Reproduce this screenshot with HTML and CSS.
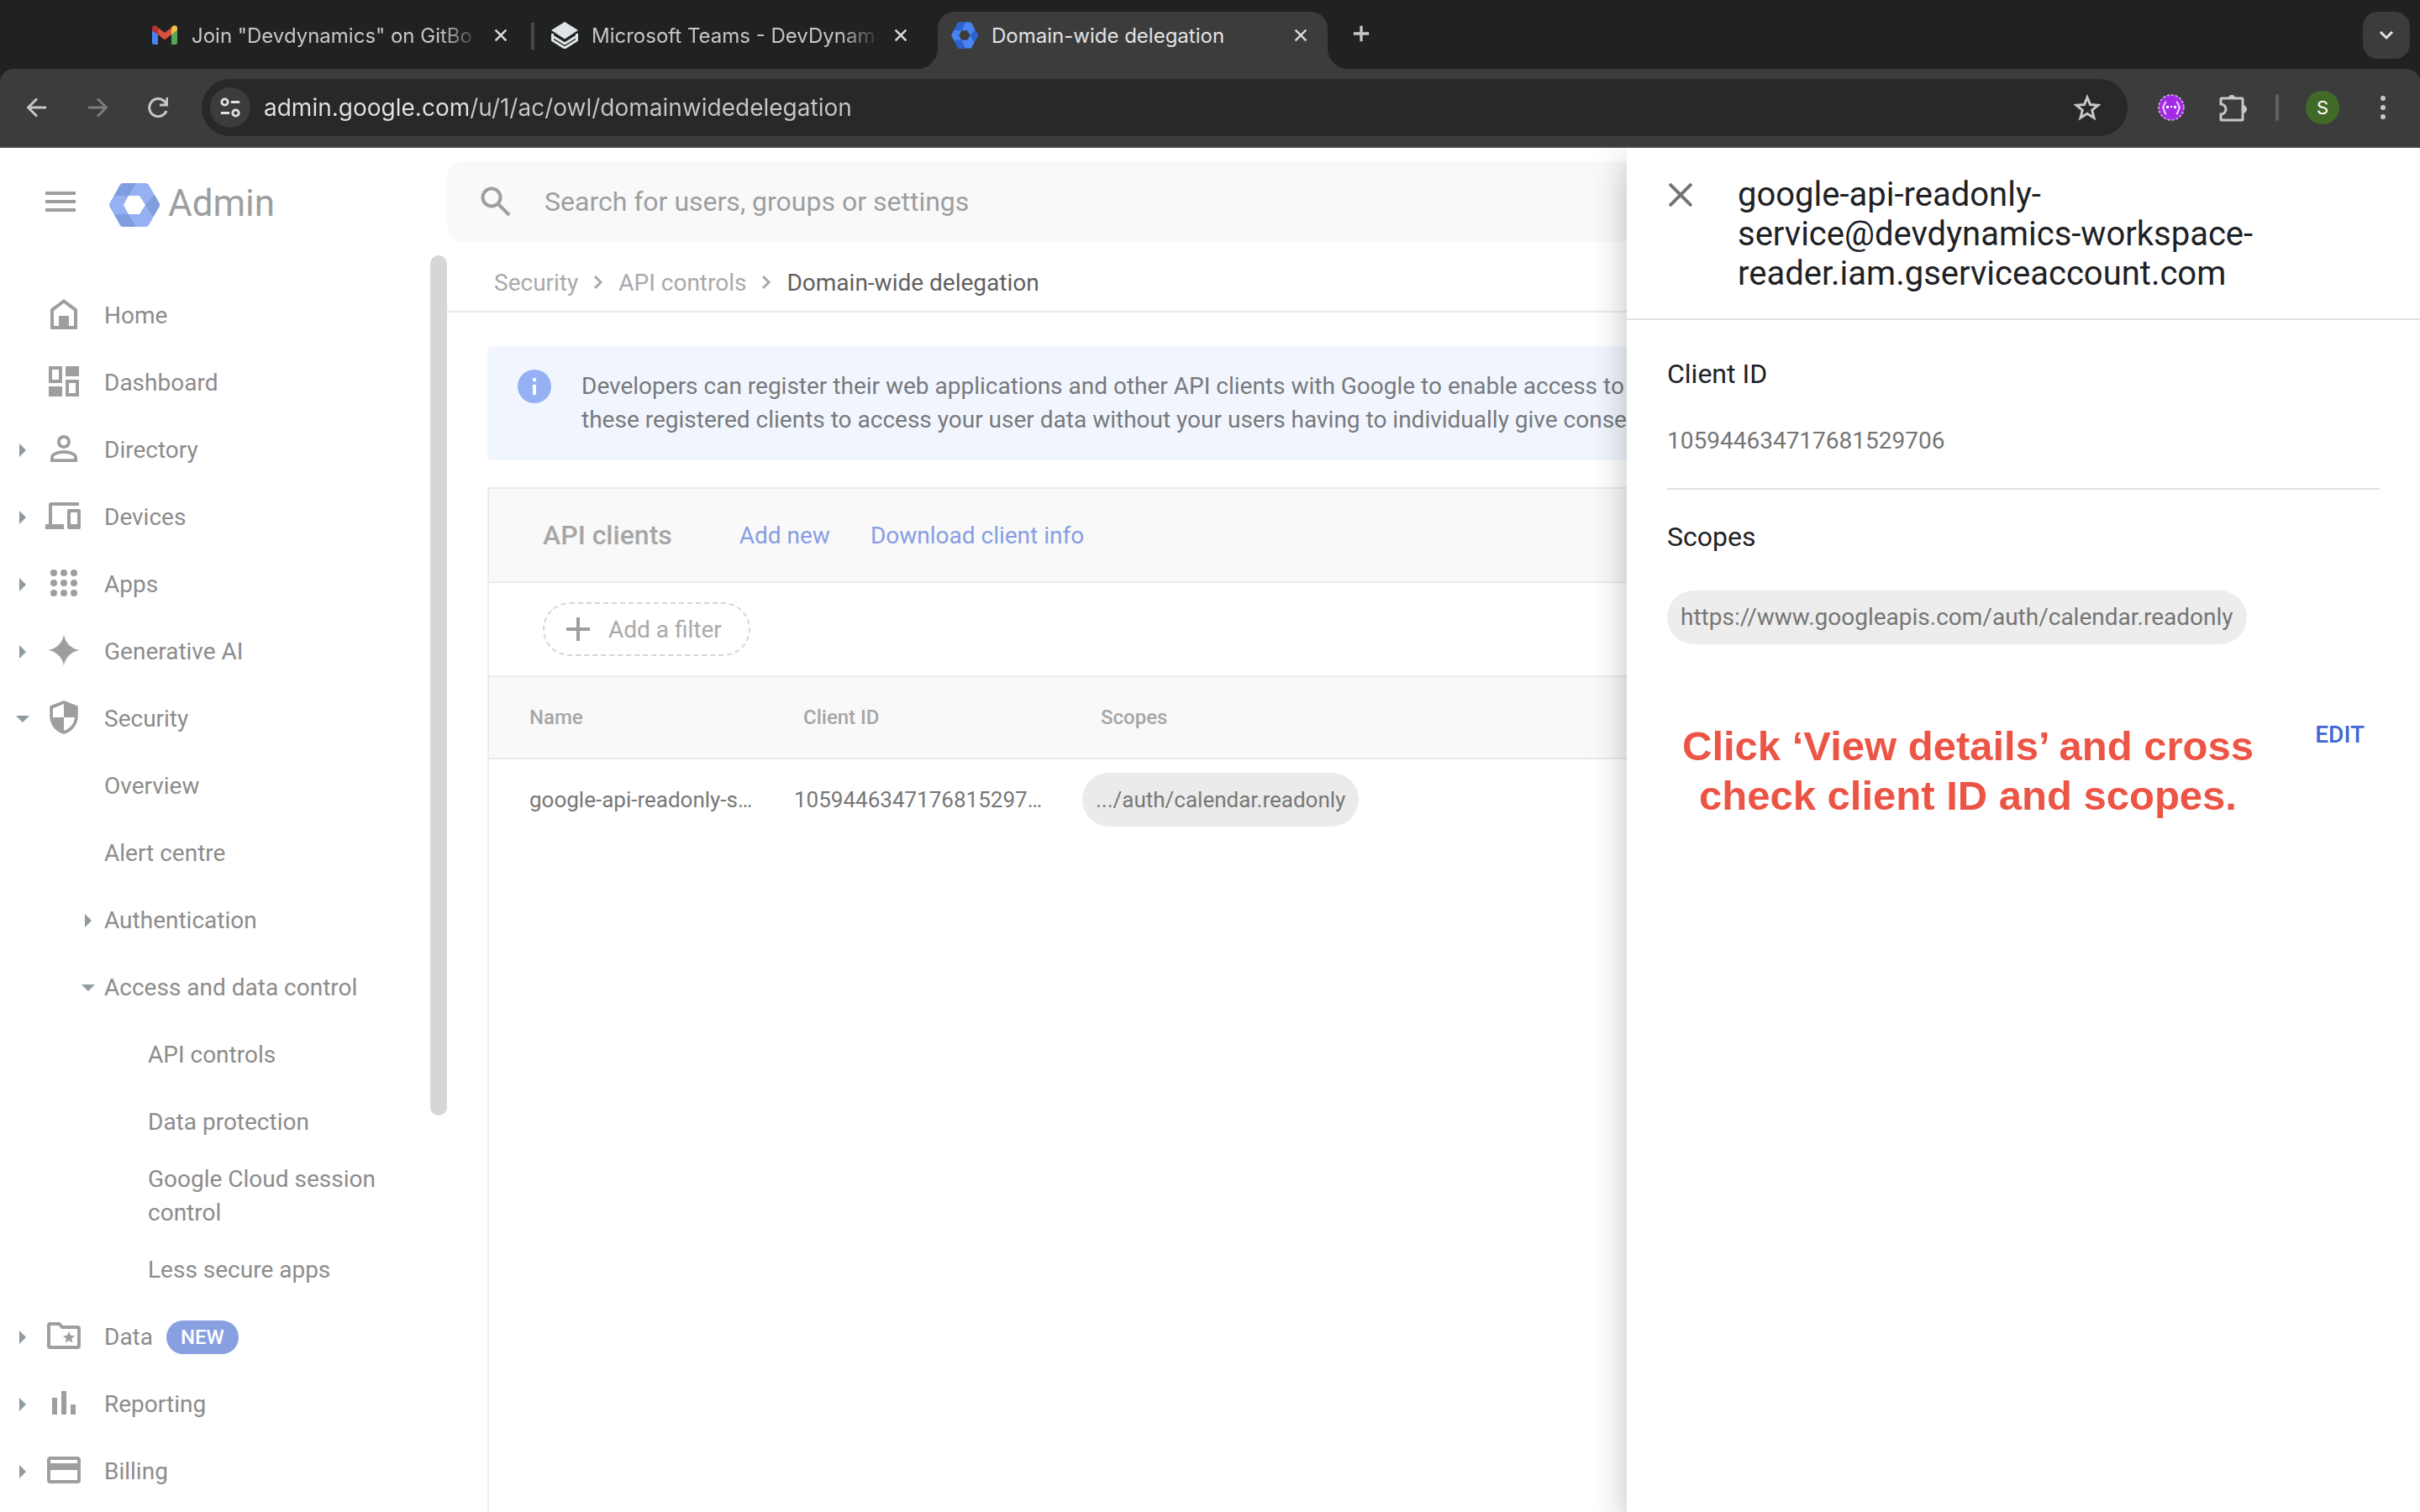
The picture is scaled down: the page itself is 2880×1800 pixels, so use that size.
FILE: index.html
```
<!DOCTYPE html>
<html lang="en">
<head>
    <meta charset="UTF-8">
    <meta name="viewport" content="width=device-width, initial-scale=1.0">
    <title>Domain-wide delegation</title>
    <link rel="stylesheet" href="styles.css">
</head>
<body>
    <header class="browser">
        <div class="tabs">
            <div class="tab">
                <svg class="favicon" viewBox="0 0 32 32">
                    <path fill="#4a84f4" d="M1 10v15a2 2 0 0 0 2 2h5V15z"/>
                    <path fill="#56a65b" d="M31 10v15a2 2 0 0 1-2 2h-5V15z"/>
                    <path fill="#d9503f" d="M8 15V7l8 6 8-6v8l-8 6.500z"/>
                    <path fill="#b8312a" d="M1 10V7.500C1 4 4.500 3.500 7 5.500L8 6.500V15.500z"/>
                    <path fill="#f2bd42" d="M31 10V7.500C31 4 27.500 3.500 25 5.500L24 6.500V15.500z"/>
                </svg>
                <span class="tab-title">Join "Devdynamics" on GitBo</span>
                <button class="tab-close" aria-label="Close tab"><svg viewBox="0 0 20 20"><path d="M2 2l16 16M18 2L2 18"/></svg></button>
            </div>
            <div class="tab-separator"></div>
            <div class="tab">
                <svg class="favicon" viewBox="0 0 32 32">
                    <path fill="#dfe4e6" d="M16 0l16 10-16 10.500L0 10z"/>
                    <path fill="none" stroke="#dfe4e6" stroke-width="3" stroke-linejoin="round" d="M1.500 14v3L16 26l14.500-9v-3"/>
                    <path fill="none" stroke="#dfe4e6" stroke-width="3" stroke-linejoin="round" d="M1.500 17v5L16 31l14.500-9v-5"/>
                </svg>
                <span class="tab-title">Microsoft Teams - DevDynam</span>
                <button class="tab-close" aria-label="Close tab"><svg viewBox="0 0 20 20"><path d="M2 2l16 16M18 2L2 18"/></svg></button>
            </div>
            <div class="tab tab-active">
                <svg class="favicon" viewBox="-1 -4 62 60">
                    <path fill="#4a84f4" fill-rule="evenodd" d="M15 -4h30L61 26 45 56H15L-1 26zM23 15l-6 11 6 11h13l7-11-7-11z"/>
                    <path fill="#2b62d0" d="M15-4h17L23 15H5zM54 13L43 26l9 17 9-17zM5 37h18l9 19H15z"/>
                </svg>
                <span class="tab-title">Domain-wide delegation</span>
                <button class="tab-close" aria-label="Close tab"><svg viewBox="0 0 20 20"><path d="M2 2l16 16M18 2L2 18"/></svg></button>
            </div>
            <button class="new-tab" aria-label="New tab"><svg viewBox="0 0 24 24"><path d="M12 1v22M1 12h22"/></svg></button>
            <button class="tab-search" aria-label="Search tabs"><svg viewBox="0 0 24 24"><path d="M5 8l7 7 7-7"/></svg></button>
        </div>
        <div class="toolbar">
            <button class="nav-btn" aria-label="Back"><svg viewBox="0 0 24 24"><path d="M23 12H2M12 1.500L1.500 12 12 22.500"/></svg></button>
            <button class="nav-btn nav-off" aria-label="Forward"><svg viewBox="0 0 24 24"><path d="M1 12h21M12 1.500L22.500 12 12 22.500"/></svg></button>
            <button class="nav-btn" aria-label="Reload"><svg viewBox="0 0 24 24"><path d="M22 16A10.500 10.500 0 1 1 20 5l2.500 3M23 0v9h-9"/></svg></button>
            <div class="omnibox">
                <button class="site-info" aria-label="Site information">
                    <svg viewBox="0 0 28 28"><circle cx="7" cy="7" r="4"/><path d="M15 7h11M2 21h11"/><circle cx="21" cy="21" r="4"/></svg>
                </button>
                <input class="url" type="text" aria-label="Address" value="admin.google.com/u/1/ac/owl/domainwidedelegation">
                <button class="star" aria-label="Bookmark"><svg viewBox="0 0 32 32"><path d="M16 4l3.500 8.500 9.500.7-7.300 6 2.300 9-8-5-8 5 2.300-9L3 13.200l9.500-.7z"/></svg></button>
            </div>
            <svg class="ext-icon" viewBox="0 0 32 32">
                <circle cx="16" cy="16" r="15" fill="#a32be6" stroke="#dfb4f5" stroke-width="1.500" stroke-dasharray="3 2"/>
                <path fill="none" stroke="#f0d8fb" stroke-width="2" d="M10 9c-3 2-2 5-4 7 2 2 1 6 4 8M22 9c3 2 2 5 4 7-2 2-1 6-4 8"/>
                <path fill="#fff" d="M10 14h3v3h-3zM15 14h2v2h-2zM19 14h3v3h-3z"/>
            </svg>
            <button class="puzzle" aria-label="Extensions"><svg viewBox="0 0 34 34"><path d="M4 6h24a1 1 0 0 1 1 1v24a1 1 0 0 1-1 1H4a1 1 0 0 1-1-1v-6a5.500 5.500 0 0 0 0-12V7a1 1 0 0 1 1-1z"/><path class="solid" d="M12 6a4 4 0 0 1 8 0zM29 14a4 4 0 0 1 0 10z"/></svg></button>
            <div class="toolbar-separator"></div>
            <button class="avatar" aria-label="Profile">S</button>
            <button class="more" aria-label="Menu"><svg viewBox="0 0 8 32"><circle cx="4" cy="5" r="3"/><circle cx="4" cy="16" r="3"/><circle cx="4" cy="27" r="3"/></svg></button>
        </div>
    </header>

    <div class="page">
        <aside class="sidebar">
            <div class="brand">
                <button class="menu-btn" aria-label="Main menu"><svg viewBox="0 0 36 24"><path d="M0 2h36M0 12h36M0 22h36"/></svg></button>
                <svg class="logo" viewBox="0 0 60 52">
                    <path fill="#96b1f3" fill-rule="evenodd" d="M17 0h26q3 0 4 2l12 21q2 3 0 6L47 50q-1 2-4 2H17q-3 0-4-2L1 29q-2-3 0-6L13 2q1-2 4-2zM23 15l-6 11 6 11h13l7-11-7-11z"/>
                    <path fill="#7f9ede" d="M17 0h15l-9 15H6l7-13q1-2 4-2zM54 14L43 26l9 14 7-11q2-3 0-6zM6 37h17l9 15H17q-3 0-4-2z"/>
                </svg>
                <span class="brand-name">Admin</span>
            </div>
            <nav class="nav">
                <a href="#" class="item"><span class="caret"></span><svg class="icon" viewBox="0 0 24 24"><path fill-rule="evenodd" d="M12 3l8 6v12H4V9zM12 5.500L6 10v9h3v-6h6v6h3v-9z"/><path d="M9 13h6v6H9z"/></svg>Home</a>
                <a href="#" class="item"><span class="caret"></span><svg class="icon" viewBox="0 0 24 24"><path fill-rule="evenodd" d="M3 3h8v10H3zM5 5v6h4V5zM13 3h8v6h-8zM3 15h8v6H3zM13 11h8v10h-8zM15 13v6h4v-6z"/></svg>Dashboard</a>
                <a href="#" class="item"><span class="caret closed"></span><svg class="icon" viewBox="0 0 24 24"><path d="M12 5.900a2.100 2.100 0 1 1 0 4.200 2.100 2.100 0 0 1 0-4.200m0 9c2.970 0 6.100 1.460 6.100 2.100v1.100H5.900V17c0-.64 3.130-2.100 6.100-2.100M12 4C9.790 4 8 5.790 8 8s1.790 4 4 4 4-1.790 4-4-1.790-4-4-4zm0 9c-2.670 0-8 1.340-8 4v3h16v-3c0-2.660-5.330-4-8-4z"/></svg>Directory</a>
                <a href="#" class="item"><span class="caret closed"></span><svg class="icon" viewBox="0 0 24 24"><path fill-rule="evenodd" d="M21 6H5v11h7v3H1v-3h2V5.500Q3 4 4.500 4H21zM15 8h6q1 0 1 1v10q0 1-1 1h-6q-1 0-1-1V9q0-1 1-1zM16 10v7h4v-7z"/></svg>Devices</a>
                <a href="#" class="item"><span class="caret closed"></span><svg class="icon" viewBox="0 0 24 24"><circle cx="6" cy="6" r="2"/><circle cx="12" cy="6" r="2"/><circle cx="18" cy="6" r="2"/><circle cx="6" cy="12" r="2"/><circle cx="12" cy="12" r="2"/><circle cx="18" cy="12" r="2"/><circle cx="6" cy="18" r="2"/><circle cx="12" cy="18" r="2"/><circle cx="18" cy="18" r="2"/></svg>Apps</a>
                <a href="#" class="item"><span class="caret closed"></span><svg class="icon" viewBox="0 0 24 24"><path d="M12 2.500c.6 5 4.500 8.900 9.500 9.500-5 .6-8.900 4.500-9.500 9.500-.6-5-4.500-8.900-9.500-9.500 5-.6 8.900-4.500 9.500-9.500z"/></svg>Generative AI</a>
                <a href="#" class="item"><span class="caret open"></span><svg class="icon" viewBox="0 0 24 24"><path fill-rule="evenodd" d="M12 2l8.400 3.300V11c0 5.500-3.600 9.700-8.400 11-4.800-1.300-8.400-5.500-8.400-11V5.300zM12 4L5.500 6.600V12H12zM12 12v8c3.700-1.300 6.200-4.300 6.500-8z"/></svg>Security</a>
                <a href="#" class="item sub">Overview</a>
                <a href="#" class="item sub">Alert centre</a>
                <a href="#" class="item nested"><span class="caret closed"></span>Authentication</a>
                <a href="#" class="item nested"><span class="caret open"></span>Access and data control</a>
                <a href="#" class="item deep">API controls</a>
                <a href="#" class="item deep">Data protection</a>
                <a href="#" class="item deep">Google Cloud session control</a>
                <a href="#" class="item deep">Less secure apps</a>
                <a href="#" class="item"><span class="caret closed"></span><svg class="icon" viewBox="0 0 24 24"><path fill-rule="evenodd" d="M4 4h5.500l2 2H20q2 0 2 2v10q0 2-2 2H4q-2 0-2-2V6q0-2 2-2zM4 6v12h16V8h-9.300l-2-2z"/><path d="M15 9.500l1 2.400 2.600.2-2 1.700.6 2.500-2.200-1.300-2.200 1.300.6-2.500-2-1.700 2.600-.2z"/></svg>Data<span class="badge">NEW</span></a>
                <a href="#" class="item"><span class="caret closed"></span><svg class="icon" viewBox="0 0 24 24"><path d="M5 9h3v10H5zM10.500 5h3v14h-3zM16 13h3v6h-3z"/></svg>Reporting</a>
                <a href="#" class="item"><span class="caret closed"></span><svg class="icon" viewBox="0 0 24 24"><path fill-rule="evenodd" d="M4 4h16q2 0 2 2v12q0 2-2 2H4q-2 0-2-2V6q0-2 2-2zM4 6v2h16V6zM4 12v6h16v-6z"/></svg>Billing</a>
            </nav>
            <div class="scroll-thumb"></div>
        </aside>

        <main class="main">
            <label class="search">
                <svg viewBox="0 0 36 36"><circle cx="13" cy="13" r="10.500"/><path d="M21 21l13 13"/></svg>
                <input type="text" aria-label="Search" placeholder="Search for users, groups or settings">
            </label>
            <nav class="breadcrumb" aria-label="Breadcrumb">
                <a href="#">Security</a>
                <svg viewBox="0 0 12 18"><path d="M2 2l7 7-7 7"/></svg>
                <a href="#">API controls</a>
                <svg viewBox="0 0 12 18"><path d="M2 2l7 7-7 7"/></svg>
                <span class="current">Domain-wide delegation</span>
            </nav>
            <div class="content">
                <div class="banner">
                    <svg viewBox="0 0 40 40"><circle cx="20" cy="20" r="20" fill="#96b1f3"/><path fill="#fff" d="M18 10h4v4h-4zM18 18h4v12h-4z"/></svg>
                    <p>Developers can register their web applications and other API clients with Google to enable access to<br>these registered clients to access your user data without your users having to individually give consent</p>
                </div>
                <section class="card">
                    <div class="card-head">
                        <h2>API clients</h2>
                        <a href="#">Add new</a>
                        <a href="#">Download client info</a>
                    </div>
                    <div class="filters">
                        <button class="add-filter"><svg viewBox="0 0 28 28"><path d="M14 0v28M0 14h28"/></svg>Add a filter</button>
                    </div>
                    <table class="clients">
                        <thead>
                            <tr><th class="col-name">Name</th><th class="col-id">Client ID</th><th>Scopes</th></tr>
                        </thead>
                        <tbody>
                            <tr><td>google-api-readonly-s…</td><td class="cell-id">1059446347176815297…</td><td class="cell-scope"><span class="chip">.../auth/calendar.readonly</span></td></tr>
                        </tbody>
                    </table>
                </section>
            </div>
        </main>

        <aside class="drawer">
            <div class="drawer-head">
                <button class="drawer-close" aria-label="Close"><svg viewBox="0 0 28 28"><path d="M1 1l26 26M27 1L1 27"/></svg></button>
                <h1>google-api-readonly-<br>service@devdynamics-workspace-<br>reader.iam.gserviceaccount.com</h1>
            </div>
            <div class="drawer-body">
                <section class="client-id">
                    <h3>Client ID</h3>
                    <p>105944634717681529706</p>
                </section>
                <section class="scopes">
                    <h3>Scopes</h3>
                    <span class="chip">https://www.googleapis.com/auth/calendar.readonly</span>
                </section>
                <div class="actions">
                    <p class="note">Click ‘View details’ and cross<br>check client ID and scopes.</p>
                    <button class="edit">EDIT</button>
                </div>
            </div>
        </aside>
    </div>
</body>
</html>
```

FILE: styles.css
```
* {
    box-sizing: border-box;
}

body {
    margin: 0;
    height: 100vh;
    display: flex;
    flex-direction: column;
    overflow: hidden;
    font-family: Roboto, sans-serif;
    font-size: 28px;
    background-color: #fff;
}

button {
    background: none;
    border: none;
    padding: 0;
    margin: 0;
    font: inherit;
    color: inherit;
    cursor: pointer;
}

a {
    text-decoration: none;
    color: inherit;
}

svg {
    display: block;
    flex: none;
}

/* Browser chrome */
.browser {
    flex: none;
    background-color: #202221;
    font-family: Inter, sans-serif;
    color: #c7c7c7;
}

.tabs {
    display: flex;
    align-items: flex-end;
    height: 82px;
    padding: 0 12px 0 164px;
}

.tab {
    display: flex;
    align-items: center;
    width: 468px;
    height: 68px;
    padding: 0 24px 12px 20px;
    font-size: 24px;
}

.tab:first-child {
    padding: 0 28px 12px 16px;
}

.favicon {
    width: 32px;
    height: 32px;
}

.tab-title {
    flex: 1;
    margin: 0 16px;
    white-space: nowrap;
    mask-image: linear-gradient(to right, #000 86%, transparent);
}

.tab-close svg {
    width: 16px;
    height: 16px;
    fill: none;
    stroke: #dcdcdc;
    stroke-width: 3;
}

.tab-separator {
    width: 4px;
    height: 32px;
    margin-bottom: 23px;
    background-color: #474747;
}

.tab-active {
    position: relative;
    width: 464px;
    margin-left: 12px;
    padding-left: 16px;
    background-color: #3c3c3c;
    border-radius: 20px 20px 0 0;
    color: #e3e3e3;
}

.tab-active .tab-title {
    mask-image: none;
}

.tab-active::before,
.tab-active::after {
    content: "";
    position: absolute;
    bottom: 0;
    width: 24px;
    height: 24px;
}

.tab-active::before {
    left: -24px;
    background: radial-gradient(circle at 0 0, transparent 24px, #3c3c3c 24px);
}

.tab-active::after {
    right: -24px;
    background: radial-gradient(circle at 100% 0, transparent 24px, #3c3c3c 24px);
}

.new-tab {
    margin: 0 auto 32px 30px;
}

.new-tab svg {
    width: 20px;
    height: 20px;
    fill: none;
    stroke: #c7c7c7;
    stroke-width: 4;
}

.tab-search {
    display: flex;
    align-items: center;
    justify-content: center;
    width: 56px;
    height: 56px;
    margin-bottom: 12px;
    border-radius: 18px;
    background-color: #3c3c3c;
}

.tab-search svg {
    width: 24px;
    height: 24px;
    fill: none;
    stroke: #e3e3e3;
    stroke-width: 3;
}

.toolbar {
    display: flex;
    align-items: center;
    height: 94px;
    padding: 0 40px 0 32px;
    background-color: #3c3c3c;
    border-radius: 16px 16px 0 0;
    border-bottom: 2px solid #4a4849;
}

.nav-btn {
    margin-right: 48px;
}

.nav-btn svg {
    width: 24px;
    height: 24px;
    fill: none;
    stroke: #c7c7c7;
    stroke-width: 3;
}

.nav-off svg {
    stroke: #7c7c7c;
}

.omnibox {
    flex: 1;
    display: flex;
    align-items: center;
    height: 68px;
    margin: 0 36px 0 -8px;
    padding: 0 32px 0 10px;
    border-radius: 34px;
    background-color: #282828;
}

.site-info {
    display: flex;
    align-items: center;
    justify-content: center;
    width: 48px;
    height: 48px;
    border-radius: 50%;
    background-color: #3c3c3c;
}

.site-info svg {
    width: 26px;
    height: 26px;
    fill: none;
    stroke: #e3e3e3;
    stroke-width: 3;
}

/* the host is brighter than the path */
.url {
    flex: 1;
    min-width: 0;
    margin-left: 16px;
    padding: 0;
    border: none;
    font: inherit;
    color: transparent;
    background: linear-gradient(to right, #e3e3e3 246px, #c7c7c7 246px);
    background-clip: text;
}

.star svg {
    width: 32px;
    height: 32px;
    fill: none;
    stroke: #c7c7c7;
    stroke-width: 3;
}

.ext-icon {
    width: 32px;
    height: 32px;
}

.puzzle {
    margin-left: 40px;
}

.puzzle svg {
    width: 34px;
    height: 34px;
    fill: none;
    stroke: #c7c7c7;
    stroke-width: 3;
}

.puzzle .solid {
    fill: #c7c7c7;
    stroke: none;
}

.toolbar-separator {
    width: 4px;
    height: 32px;
    margin: 0 32px 0 34px;
    border-radius: 2px;
    background-color: #606060;
}

.avatar {
    width: 40px;
    height: 40px;
    border-radius: 50%;
    background-color: #416a29;
    color: #fff;
    font-size: 22px;
}

.more {
    margin-left: 48px;
}

.more svg {
    width: 8px;
    height: 32px;
    fill: #c7c7c7;
}

/* Page */
.page {
    position: relative;
    flex: 1;
    min-height: 0;
    display: flex;
    overflow: hidden;
}

.sidebar {
    position: relative;
    flex: none;
    width: 532px;
    color: #8c8c8c;
}

.brand {
    display: flex;
    align-items: center;
    height: 136px;
    margin-bottom: 24px;
    padding-left: 54px;
}

.menu-btn {
    margin-right: 40px;
    padding-bottom: 8px;
}

.menu-btn svg {
    width: 36px;
    height: 24px;
    stroke: #9d9ea0;
    stroke-width: 4;
}

.logo {
    width: 60px;
    height: 54px;
}

.brand-name {
    margin-left: 10px;
    padding-bottom: 4px;
    font-size: 44px;
    color: #9d9ea0;
}

.item {
    display: flex;
    align-items: center;
    min-height: 80px;
    padding: 8px 40px 8px 12px;
    line-height: 40px;
}

.caret {
    flex: none;
    display: flex;
    justify-content: center;
    width: 30px;
}

.closed::before,
.open::before {
    content: "";
    border: 8px solid transparent;
}

.closed::before {
    border-left-color: #8f9aa1;
    border-right-width: 0;
}

.open::before {
    border-top-color: #8f9aa1;
    border-bottom-width: 0;
}

.icon {
    width: 48px;
    height: 48px;
    margin: 0 24px 4px 10px;
    fill: #9d9ea0;
}

.sub {
    padding-left: 124px;
}

.nested {
    padding-left: 90px;
}

.nested .caret {
    margin-right: 4px;
}

.deep {
    padding-left: 176px;
}

.badge {
    height: 40px;
    margin-left: 16px;
    padding: 0 17px;
    border-radius: 20px;
    background-color: #889fe1;
    color: #fff;
    font-size: 24px;
    font-weight: 500;
}

.scroll-thumb {
    position: absolute;
    top: 128px;
    right: 0;
    width: 20px;
    height: 1024px;
    border-radius: 10px;
    background-color: #d6d6d6;
}

.main {
    flex: 1;
    min-width: 0;
    display: flex;
    flex-direction: column;
    padding-top: 16px;
}

.search {
    flex: none;
    display: flex;
    align-items: center;
    height: 96px;
    padding-left: 40px;
    border-radius: 20px;
    background-color: #f9f9f9;
}

.search svg {
    width: 36px;
    height: 36px;
    fill: none;
    stroke: #9d9ea0;
    stroke-width: 4;
}

.search input {
    flex: 1;
    margin-left: 40px;
    padding: 0;
    border: none;
    background: none;
    font: inherit;
    font-size: 32px;
}

.search input::placeholder {
    color: #9d9ea0;
}

.breadcrumb {
    flex: none;
    display: flex;
    align-items: center;
    gap: 18px;
    height: 84px;
    padding: 14px 56px 0;
    border-bottom: 2px solid #ebebeb;
    color: #a9a9a9;
}

.breadcrumb svg {
    width: 12px;
    height: 18px;
    fill: none;
    stroke: #a9a9a9;
    stroke-width: 3;
}

.breadcrumb .current {
    color: #606062;
}

.content {
    flex: 1;
    display: flex;
    flex-direction: column;
    gap: 32px;
    padding: 40px 48px 0;
}

.banner {
    display: flex;
    padding: 28px 36px;
    border-radius: 6px;
    background-color: #f1f6fe;
    color: #77797c;
}

.banner svg {
    width: 40px;
    height: 40px;
}

.banner p {
    margin: 0 0 0 36px;
    white-space: nowrap;
    line-height: 40px;
}

.card {
    flex: 1;
    border: 2px solid #ebebeb;
    border-bottom: none;
}

.card-head {
    display: flex;
    align-items: center;
    height: 112px;
    padding-left: 64px;
    background-color: #f9f9f9;
    border-bottom: 2px solid #ebebeb;
    color: #869ee3;
}

.card-head h2 {
    margin: 0 80px 0 0;
    font-size: 32px;
    font-weight: 500;
    color: #a6a6a6;
}

.card-head a + a {
    margin-left: 48px;
}

.filters {
    display: flex;
    align-items: center;
    height: 112px;
    padding-left: 64px;
    border-bottom: 2px solid #ebebeb;
}

.add-filter {
    display: flex;
    align-items: center;
    gap: 22px;
    height: 64px;
    padding: 0 32px 0 26px;
    border: 2px dashed #d6d6d6;
    border-radius: 32px;
    color: #a9a9a9;
}

.add-filter svg {
    width: 28px;
    height: 28px;
    stroke: #9d9ea0;
    stroke-width: 4;
}

.clients {
    width: 100%;
    table-layout: fixed;
    border-collapse: collapse;
    text-align: left;
    white-space: nowrap;
    color: #777;
    font-size: 26px;
}

.clients th {
    height: 97px;
    padding: 0 48px;
    background-color: #f9f9f9;
    border-bottom: 2px solid #ebebeb;
    font-size: 24px;
    font-weight: 500;
    color: #a6a6a6;
}

.clients td {
    height: 96px;
    padding: 0 0 0 48px;
}

.clients .col-name {
    width: 326px;
}

.clients .col-id {
    width: 354px;
}

.clients .cell-id {
    padding-left: 37px;
}

.clients .cell-scope {
    padding-left: 26px;
}

.chip {
    display: inline-block;
    padding: 0 16px;
    border-radius: 32px;
    line-height: 64px;
    background-color: #ebebeb;
}

/* Details drawer */
.drawer {
    position: absolute;
    top: 0;
    right: 0;
    bottom: 0;
    width: 944px;
    background-color: #fff;
    box-shadow: 0 16px 40px rgba(0, 0, 0, 0.26);
    color: #202124;
}

.drawer-head {
    display: flex;
    align-items: flex-start;
    padding: 32px 48px 30px 50px;
    border-bottom: 2px solid #e0e0e0;
}

.drawer-close {
    margin: 10px 54px 0 0;
}

.drawer-close svg {
    width: 28px;
    height: 28px;
    stroke: #757575;
    stroke-width: 4;
}

.drawer-head h1 {
    margin: 0;
    font-size: 40px;
    font-weight: 400;
    line-height: 47px;
}

.drawer-body {
    padding: 44px 48px 0;
    color: #757575;
}

.drawer-body h3 {
    margin: 0;
    font-size: 32px;
    font-weight: 400;
    line-height: 40px;
    color: #202124;
}

.client-id {
    padding-bottom: 36px;
    border-bottom: 2px solid #e0e0e0;
}

.client-id p {
    margin: 40px 0 0;
    line-height: 40px;
}

.scopes {
    padding: 36px 0 84px;
}

.scopes .chip {
    margin-top: 44px;
    background-color: #ededed;
}

.actions {
    display: flex;
    align-items: flex-start;
    justify-content: space-between;
    padding: 8px 18px 0;
}

.note {
    margin: 0;
    font-family: "Liberation Sans", sans-serif;
    font-size: 49px;
    font-weight: bold;
    line-height: 59px;
    text-align: center;
    white-space: nowrap;
    color: #ec5545;
}

.edit {
    line-height: 32px;
    font-weight: 500;
    color: #4067d5;
}
```
